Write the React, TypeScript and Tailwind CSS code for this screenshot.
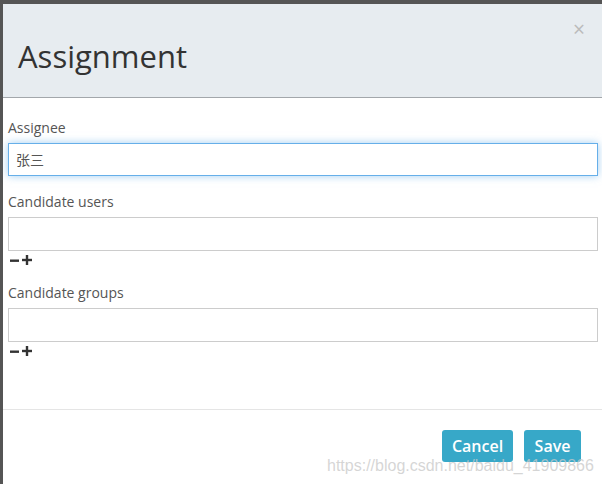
import React from "react";

function PlusMinus() {
  return (
    <div className="flex items-center gap-[3px] h-[14px] pl-[2px] mt-[2px]">
      <svg width="9" height="9" viewBox="0 0 9 9">
        <rect x="0" y="3.5" width="9" height="2.4" fill="#333" />
      </svg>
      <svg width="10" height="10" viewBox="0 0 10 10">
        <rect x="0" y="3.8" width="10" height="2.4" fill="#333" />
        <rect x="3.8" y="0" width="2.4" height="10" fill="#333" />
      </svg>
    </div>
  );
}

export default function App() {
  const font = { fontFamily: '"Open Sans", "Noto Sans CJK SC", sans-serif' };
  return (
    <div className="w-[602px] h-[484px] bg-[#555555] pt-[4px] pl-[3px] overflow-hidden relative" style={font}>
      <div className="w-[599px] h-[480px] bg-white flex flex-col">
        <div className="h-[94px] bg-[#e7ecf0] border-b border-[#a3a7ab] relative flex items-end pl-[15px] pb-[23px]">
          <div className="text-[31px] leading-[36px] text-[#333]">Assignment</div>
          <div className="absolute right-[17px] top-[15px] text-[21px] leading-[21px] text-[#bbb]">×</div>
        </div>
        <div className="px-[5px] pt-[20px] flex flex-col">
          <div className="text-[14px] leading-[20px] text-[#555] mb-[5px]">Assignee</div>
          <div className="h-[33px] w-[590px] border border-[#66afe9] shadow-[0_0_8px_rgba(102,175,233,0.6)] flex items-center px-[7px] text-[14px] text-[#555]">
            张三
          </div>
          <div className="text-[14px] leading-[20px] text-[#555] mt-[16px] mb-[5px]">Candidate users</div>
          <div className="h-[34px] w-[590px] border border-[#ccc]" />
          <PlusMinus />
          <div className="text-[14px] leading-[20px] text-[#555] mt-[16px] mb-[5px]">Candidate groups</div>
          <div className="h-[34px] w-[590px] border border-[#ccc]" />
          <PlusMinus />
        </div>
        <div className="mt-[51px] border-t border-[#e5e5e5] flex justify-end gap-[11px] pt-[20px] pr-[21px]">
          <div className="h-[32px] w-[71px] bg-[#37a8c8] rounded-[3px] text-white text-[16px] font-semibold flex items-center justify-center">Cancel</div>
          <div className="h-[32px] w-[57px] bg-[#37a8c8] rounded-[3px] text-white text-[16px] font-semibold flex items-center justify-center">Save</div>
        </div>
      </div>
      <div
        className="absolute left-[327px] top-[453px] text-[16px] whitespace-nowrap text-[rgba(200,200,200,0.75)] leading-[26px]"
        style={{ fontFamily: '"Liberation Sans", Arial, sans-serif' }}
      >
        https://blog.csdn.net/baidu_41909866
      </div>
    </div>
  );
}
